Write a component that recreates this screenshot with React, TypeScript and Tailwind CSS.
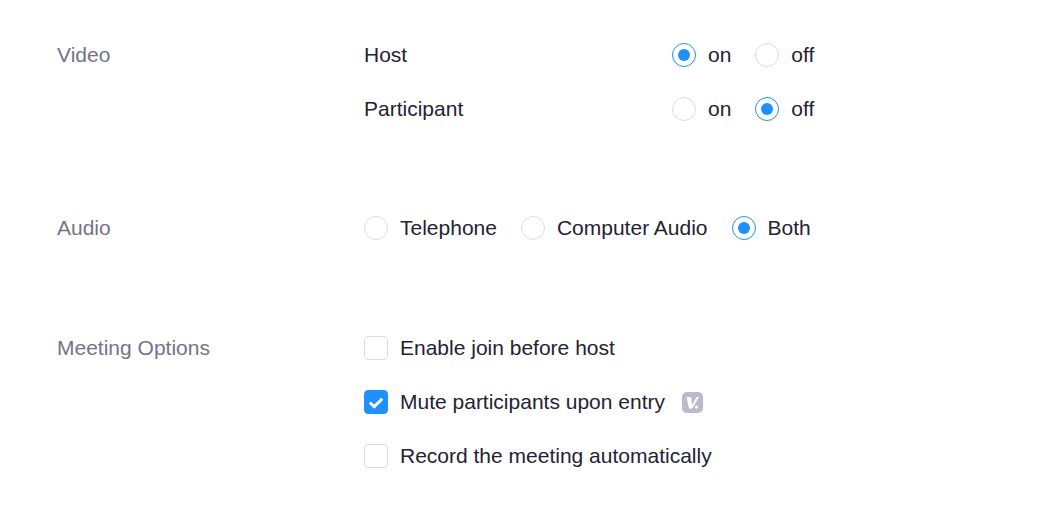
const font = "font-['Liberation_Sans',sans-serif]"

function Radio({ checked, label }: { checked?: boolean; label: string }) {
  return (
    <label className="flex items-center">
      <span
        className={`flex h-6 w-6 items-center justify-center rounded-full border bg-white ${
          checked ? "border-[#1e90ff]" : "border-[#dcdcdc]"
        }`}
      >
        {checked && <span className="h-3 w-3 rounded-full bg-[#1e90ff]" />}
      </span>
      <span className="ml-3 text-[#232333]">{label}</span>
    </label>
  )
}

function Checkbox({ checked, label }: { checked?: boolean; label: string }) {
  return (
    <label className="flex h-6 items-center">
      <span
        className={`flex h-6 w-6 items-center justify-center rounded-[4px] border ${
          checked ? "border-[#1e90ff] bg-[#1e90ff]" : "border-[#dcdcdc] bg-white"
        }`}
      >
        {checked && (
          <svg width="16" height="16" viewBox="0 0 16 16" fill="none">
            <path d="M1.8 8.6 L6.3 12.6 L14.2 4.8" stroke="white" strokeWidth="3" />
          </svg>
        )}
      </span>
      <span className="ml-3 text-[#232333]">{label}</span>
    </label>
  )
}

export default function App() {
  return (
    <div className={`h-[516px] w-[1061px] overflow-hidden bg-white pl-[57px] pt-[43px] text-[21px] leading-6 ${font}`}>
      <section className="flex">
        <div className="w-[307px] text-[#747487]">Video</div>
        <div className="flex flex-col gap-[30px]">
          <div className="flex">
            <div className="w-[308px] text-[#232333]">Host</div>
            <div className="flex gap-6">
              <Radio checked label="on" />
              <Radio label="off" />
            </div>
          </div>
          <div className="flex">
            <div className="w-[308px] text-[#232333]">Participant</div>
            <div className="flex gap-6">
              <Radio label="on" />
              <Radio checked label="off" />
            </div>
          </div>
        </div>
      </section>

      <section className="mt-[95px] flex">
        <div className="w-[307px] text-[#747487]">Audio</div>
        <div className="flex gap-6">
          <Radio label="Telephone" />
          <Radio label="Computer Audio" />
          <Radio checked label="Both" />
        </div>
      </section>

      <section className="mt-[96px] flex">
        <div className="w-[307px] text-[#747487]">Meeting Options</div>
        <div className="flex flex-col gap-[30px]">
          <Checkbox label="Enable join before host" />
          <div className="flex items-center">
            <Checkbox checked label="Mute participants upon entry" />
            <span className="ml-[17px] flex h-[21px] w-[21px] items-center justify-center rounded-[5px] bg-[#babacc]">
              {/* slanted V badge with a dot */}
              <svg width="21" height="21" viewBox="0 0 21 21">
                <path d="M4.5 5 H9.2 L9.8 13.2 L14.6 5 H17 L10.2 16.5 H7 Z" fill="white" />
                <circle cx="14.6" cy="15" r="1.6" fill="white" />
              </svg>
            </span>
          </div>
          <Checkbox label="Record the meeting automatically" />
        </div>
      </section>
    </div>
  )
}
